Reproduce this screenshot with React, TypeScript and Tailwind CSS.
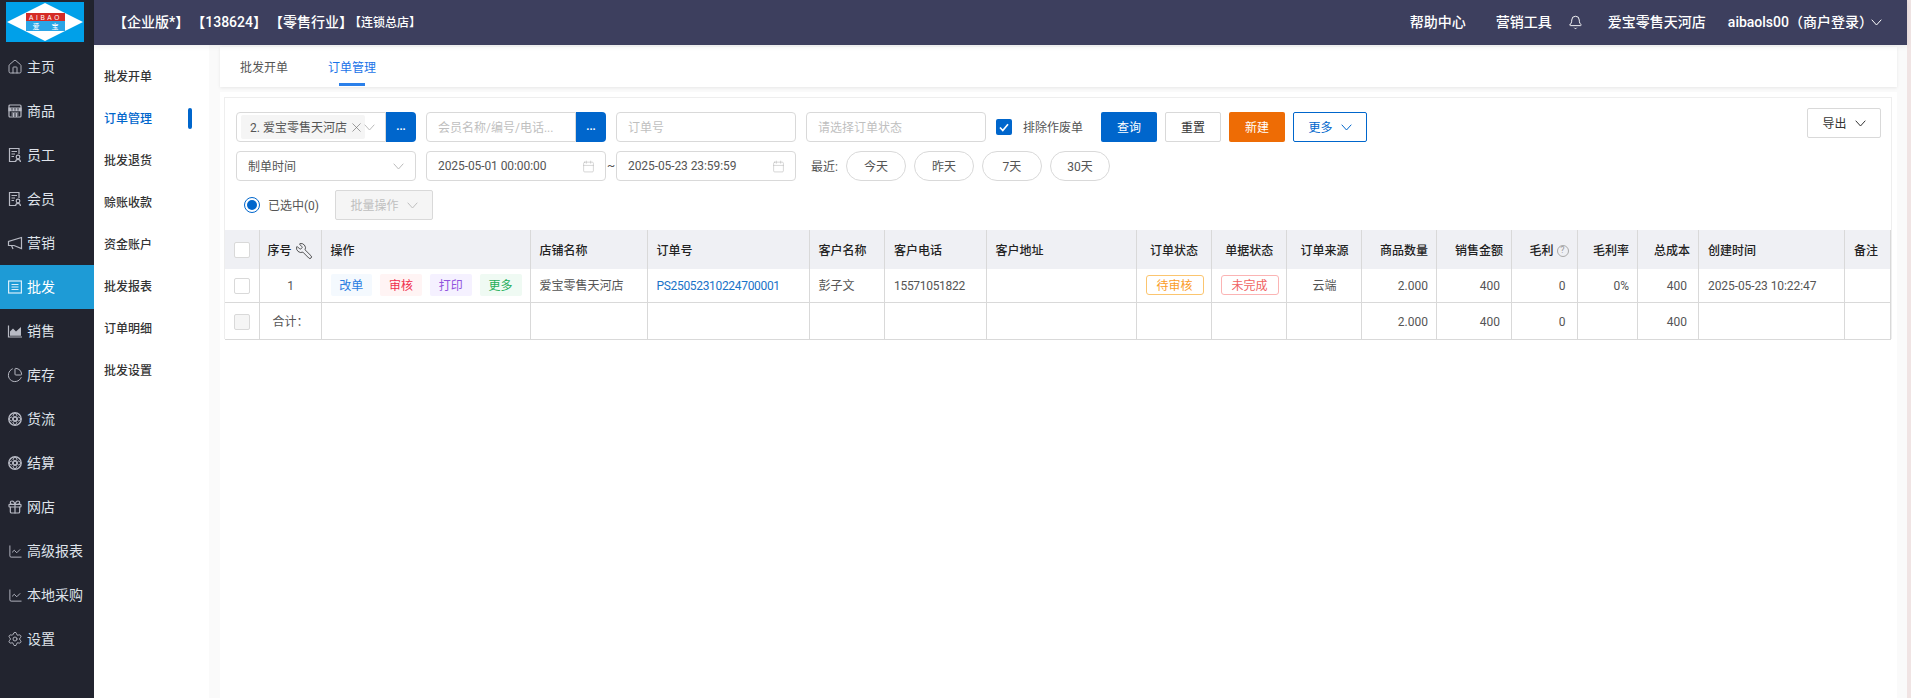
import type { ReactNode } from "react";
import { Bell, Calendar, ChartLine, ChartPie, Gift, House, Settings, Wrench, X } from "lucide-react";

function Chev(props: { className?: string }) {
  return (
    <svg width="11" height="7" viewBox="0 0 11 7" fill="none" stroke="currentColor" strokeWidth="1" className={props.className}>
      <path d="M0.7 0.7 5.5 6 10.3 0.7" />
    </svg>
  );
}

function Logo() {
  return (
    <svg width="78" height="40" viewBox="0 0 78 40" className="block">
      <rect width="78" height="40" fill="#00a0e9" />
      <path d="M39 1 77 20 39 39 1 20Z" fill="#fff" />
      <rect x="20" y="11" width="39" height="18" fill="#2aa5e6" />
      <rect x="20" y="11" width="39" height="8" fill="#d52b25" />
      <text x="39.5" y="17.6" textAnchor="middle" fontSize="6.5" letterSpacing="2.6" fill="#fff" fontFamily="Liberation Sans, sans-serif">AIBAO</text>
      <text x="30" y="27" textAnchor="middle" fontSize="7" fill="#fff" fontFamily="Noto Sans CJK SC, sans-serif">爱</text>
      <text x="49" y="27" textAnchor="middle" fontSize="7" fill="#fff" fontFamily="Noto Sans CJK SC, sans-serif">宝</text>
    </svg>
  );
}

function ShopIcon() {
  return (
    <svg width="16" height="16" viewBox="0 0 16 16" fill="none" stroke="currentColor" strokeWidth="1.2">
      <rect x="2" y="2" width="12" height="12" rx="1" />
      <path d="M2 5.2H14V7.6H2Z" fill="currentColor" />
      <path d="M5 7.6V5M8 7.6V5M11 7.6V5" stroke="#22242f" strokeWidth="0.8" />
      <path d="M4.5 10H11.5M4.5 12H11.5M6.5 10V14M9.5 10V14" strokeWidth="1" />
    </svg>
  );
}

function DocPersonIcon() {
  return (
    <svg width="16" height="16" viewBox="0 0 16 16" fill="none" stroke="currentColor" strokeWidth="1.2">
      <path d="M8 14.5H2.5V1.5H12V7" />
      <path d="M4.5 4.5H10M4.5 7H8M4.5 9.5H7" />
      <circle cx="11" cy="10" r="1.8" />
      <path d="M8.5 15c.2-1.7 1-2.6 2.5-2.6s2.3.9 2.5 2.6" />
    </svg>
  );
}

function MegaIcon() {
  return (
    <svg width="16" height="16" viewBox="0 0 16 16" fill="none" stroke="currentColor" strokeWidth="1.2">
      <path d="M14.5 2.5V13.5L7 10.5H1.5V6.5L14.5 2.5Z" />
      <path d="M4.5 10.5 6 14" />
    </svg>
  );
}

function ListBoxIcon() {
  return (
    <svg width="16" height="16" viewBox="0 0 16 16" fill="none" stroke="currentColor" strokeWidth="1.2">
      <rect x="1.6" y="2" width="12.8" height="12" />
      <path d="M4.5 5.5H11.5M4.5 8H11.5M4.5 10.5H11.5" strokeWidth="1" />
    </svg>
  );
}

function AreaIcon() {
  return (
    <svg width="16" height="16" viewBox="0 0 16 16" fill="none" stroke="currentColor" strokeWidth="1.2">
      <path d="M1.5 2.5V14H15" />
      <path d="M3 12.8V8.5L6 5.5 9 8.5 14 4V12.8Z" fill="currentColor" stroke="none" />
    </svg>
  );
}

function FlowIcon() {
  return (
    <svg width="16" height="16" viewBox="0 0 16 16" fill="none" stroke="currentColor" strokeWidth="1.4">
      <circle cx="8" cy="8" r="6.2" />
      <circle cx="8" cy="8" r="1.9" />
      <path d="M8 1.7 5.8 4.6 8 6 10.2 4.6ZM8 14.3 5.8 11.4 8 10 10.2 11.4ZM1.7 8 4.6 5.8 6 8 4.6 10.2ZM14.3 8 11.4 5.8 10 8 11.4 10.2Z" strokeWidth="1" />
    </svg>
  );
}

function NavItem(props: { icon: ReactNode; label: string; active?: boolean }) {
  return (
    <div className={`flex h-[44px] items-center pl-[7px] text-[14px] ${props.active ? "bg-[#1e9bd6] text-white" : "text-[#dfe3ea]"}`}>
      <span className={`flex w-[16px] justify-center ${props.active ? "text-[#d8eefa]" : "text-[#b8bac4]"}`}>{props.icon}</span>
      <span className="ml-[4px] pt-[1px]">{props.label}</span>
    </div>
  );
}

const navItems: { icon: ReactNode; label: string; active?: boolean }[] = [
  { icon: <House size={16} strokeWidth={1.4} />, label: "主页" },
  { icon: <ShopIcon />, label: "商品" },
  { icon: <DocPersonIcon />, label: "员工" },
  { icon: <DocPersonIcon />, label: "会员" },
  { icon: <MegaIcon />, label: "营销" },
  { icon: <ListBoxIcon />, label: "批发", active: true },
  { icon: <AreaIcon />, label: "销售" },
  { icon: <ChartPie size={16} strokeWidth={1.5} />, label: "库存" },
  { icon: <FlowIcon />, label: "货流" },
  { icon: <FlowIcon />, label: "结算" },
  { icon: <Gift size={16} strokeWidth={1.8} />, label: "网店" },
  { icon: <ChartLine size={15} strokeWidth={1.5} />, label: "高级报表" },
  { icon: <ChartLine size={15} strokeWidth={1.5} />, label: "本地采购" },
  { icon: <Settings size={16} strokeWidth={1.4} />, label: "设置" },
];

const subItems = ["批发开单", "订单管理", "批发退货", "赊账收款", "资金账户", "批发报表", "订单明细", "批发设置"];

function Checkbox(props: { disabled?: boolean }) {
  return <span className={`mx-auto block h-[16px] w-[16px] rounded-[2px] border border-[#d9d9d9] ${props.disabled ? "bg-[#f5f5f5]" : "bg-white"}`} />;
}

function BlueDots() {
  return <div className="flex h-[30px] items-center justify-center rounded-r-[4px] bg-[#0066cc] pb-[2px] text-[11px] font-bold leading-none text-white">...</div>;
}

function DateInput(props: { value: string }) {
  return (
    <div className="flex h-[30px] w-[180px] items-center justify-between rounded-[4px] border border-[#d9d9d9] pl-[11px] pr-[10px] text-[#555]">
      <span className="tracking-[-0.08px]">{props.value}</span>
      <Calendar size={13} strokeWidth={1} className="text-[#b5b5b5]" />
    </div>
  );
}

function Pill(props: { label: string }) {
  return <div className="flex h-[30px] w-[60px] items-center justify-center rounded-full border border-[#d9d9d9] pt-[2px] text-[#555]">{props.label}</div>;
}

function OpPill(props: { label: string; className: string }) {
  return <span className={`flex h-[22px] w-[42px] items-center justify-center rounded-[2px] pt-[1px] ${props.className}`}>{props.label}</span>;
}

const th = "border-r border-[#d9d9d9] bg-[#eff0f4] pl-[9px] pr-[8px] pt-[2px] text-[12px] font-medium text-[#222]";
const box = "border-r border-[#d9d9d9] pl-[9px] pr-[8px] text-[12px]";
const td = "border-r border-[#d9d9d9] pl-[9px] pr-[8px] pt-[2px] text-[12px] text-[#555]";
const tdLink = "border-r border-[#d9d9d9] pl-[9px] pr-[8px] pt-[2px] text-[12px] tracking-[-0.32px] text-[#1a73c8]";
const tdNum = "border-r border-[#d9d9d9] pl-[8px] pr-[11px] pt-[2px] text-right text-[12px] text-[#555]";
const field = "h-[30px] items-center border border-[#d9d9d9] pt-[2px]";

export default function App() {
  return (
    <div className="flex h-screen w-full overflow-hidden bg-[#f0e4e4] font-['Roboto','Noto_Sans_CJK_SC',sans-serif] text-[12px]">
      <aside className="w-[94px] shrink-0 bg-[#22242f]">
        <div className="h-[45px] pl-[6px] pt-[2px]">
          <Logo />
        </div>
        {navItems.map((item) => (
          <NavItem key={item.label} icon={item.icon} label={item.label} active={item.active} />
        ))}
      </aside>

      <div className="flex min-w-0 flex-1 flex-col">
        <header className="relative z-10 flex h-[45px] shrink-0 items-center justify-between bg-[#3d3f5e] pl-[19px] pr-[25px] font-medium text-white shadow-[0_1px_6px_rgba(0,0,0,0.08)]">
          <div className="flex items-center text-[14px]">
            <span>【企业版*】</span>
            <span className="ml-[2px]">【138624】</span>
            <span className="ml-[2px]">【零售行业】</span>
            <span className="-ml-[4px] text-[12px]">【连锁总店】</span>
          </div>
          <div className="flex items-center text-[14px]">
            <span>帮助中心</span>
            <span className="ml-[30px]">营销工具</span>
            <Bell size={15} strokeWidth={1.5} className="ml-[16px]" />
            <span className="ml-[25px]">爱宝零售天河店</span>
            <span className="ml-[22px]">aibaols00（商户登录）</span>
            <Chev className="-ml-[2px]" />
          </div>
        </header>

        <div className="flex min-h-0 flex-1">
          <nav className="w-[115px] shrink-0 bg-white pt-[10px] font-medium text-[#333]">
            {subItems.map((label) => (
              <div key={label} className={`relative flex h-[42px] items-center pl-[10px] pt-[2px] ${label === "订单管理" ? "text-[#0066cc]" : ""}`}>
                {label}
                {label === "订单管理" && <span className="absolute left-[94px] top-[11px] h-[21px] w-[4px] rounded-[2px] bg-[#0066cc]" />}
              </div>
            ))}
          </nav>

          <main className="flex min-w-0 flex-1 flex-col bg-[#fafafa] pl-[11px] pr-[10px] pt-[2px]">
            <div className="flex h-[40px] shrink-0 bg-white pl-[20px] shadow-[0_1px_3px_rgba(0,0,0,0.08)]">
              <div className="flex h-[40px] items-center pt-[1px] text-[#555]">批发开单</div>
              <div className="relative ml-[40px] flex h-[40px] items-center pt-[1px] text-[#1a73e8]">
                订单管理
                <span className="absolute bottom-[1px] left-[11px] h-[3px] w-[26px] bg-[#2b80ea]" />
              </div>
            </div>

            <div className="mt-[5px] flex-1 bg-white pl-[4px] pr-[5px] pt-[5px]">
              <section className="h-[242px] border border-b-0 border-[#eeeeee] bg-white">
                <div className="flex justify-between pl-[11px] pr-[10px] pt-[14px]">
                  <div className="flex flex-col gap-[9px]">
                    <div className="flex items-center">
                      <div className="flex h-[30px] w-[150px] items-center rounded-l-[4px] border border-[#d9d9d9] pl-[4px]">
                        <div className="flex h-[24px] w-[124px] items-center rounded-[2px] bg-[#f5f5f5] pl-[9px] pt-[1px] text-[#555]">
                          2. 爱宝零售天河店
                          <X size={15} strokeWidth={1} className="ml-[2px] text-[#666]" />
                        </div>
                        <Chev className="ml-[-1px] text-[#bbb]" />
                      </div>
                      <div className="w-[30px]"><BlueDots /></div>
                      <div className={`${field} ml-[10px] flex w-[150px] rounded-l-[4px] pl-[11px] text-[#bfbfbf]`}>会员名称/编号/电话...</div>
                      <div className="w-[30px]"><BlueDots /></div>
                      <div className={`${field} ml-[10px] flex w-[180px] rounded-[4px] pl-[11px] text-[#bfbfbf]`}>订单号</div>
                      <div className={`${field} ml-[10px] flex w-[180px] rounded-[4px] pl-[11px] text-[#bfbfbf]`}>请选择订单状态</div>
                      <div className="ml-[10px] flex h-[16px] w-[16px] items-center justify-center rounded-[2px] bg-[#0066cc]">
                        <svg width="10" height="9" viewBox="0 0 10 9" fill="none" stroke="#fff" strokeWidth="1.7"><path d="M1 4.5 3.8 7.5 9 1.2" /></svg>
                      </div>
                      <span className="ml-[11px] pt-[2px] text-[#555]">排除作废单</span>
                      <button className="ml-[18px] h-[30px] w-[56px] rounded-[2px] bg-[#0066cc] pt-[2px] text-white">查询</button>
                      <button className="ml-[8px] h-[30px] w-[56px] rounded-[2px] border border-[#d9d9d9] pt-[2px] text-[#333]">重置</button>
                      <button className="ml-[8px] h-[30px] w-[56px] rounded-[2px] bg-[#ee6c05] pt-[2px] text-white">新建</button>
                      <button className="ml-[8px] flex h-[30px] w-[74px] items-center justify-center gap-[8px] rounded-[2px] border border-[#0066cc] text-[#0066cc]">
                        <span className="pt-[2px]">更多</span> <Chev />
                      </button>
                    </div>

                    <div className="flex items-center">
                      <div className="flex h-[30px] w-[180px] items-center justify-between rounded-[4px] border border-[#d9d9d9] pl-[11px] pr-[11px] text-[#555]">
                        <span className="pt-[2px]">制单时间</span>
                        <Chev className="text-[#bbb]" />
                      </div>
                      <div className="ml-[10px]"><DateInput value="2025-05-01 00:00:00" /></div>
                      <span className="w-[10px] text-center text-[#555]">~</span>
                      <DateInput value="2025-05-23 23:59:59" />
                      <span className="ml-[15px] pt-[2px] text-[#555]">最近:</span>
                      <div className="ml-[8px] flex gap-[8px]">
                        <Pill label="今天" />
                        <Pill label="昨天" />
                        <Pill label="7天" />
                        <Pill label="30天" />
                      </div>
                    </div>

                    <div className="flex items-center pl-[8px]">
                      <span className="flex h-[16px] w-[16px] items-center justify-center rounded-full border border-[#0066cc]">
                        <span className="h-[10px] w-[10px] rounded-full bg-[#0066cc]" />
                      </span>
                      <span className="ml-[8px] pt-[2px] text-[#555]">已选中(0)</span>
                      <div className="ml-[16px] flex h-[30px] w-[98px] items-center justify-center gap-[8px] rounded-[2px] border border-[#d9d9d9] bg-[#f5f5f5] text-[#bfbfbf]">
                        <span className="pt-[1px]">批量操作</span> <Chev />
                      </div>
                    </div>
                  </div>

                  <button className="-mt-[4px] flex h-[30px] w-[74px] shrink-0 items-center justify-center gap-[8px] rounded-[2px] border border-[#d9d9d9] text-[#333]">
                    <span className="pt-[2px]">导出</span> <Chev />
                  </button>
                </div>

                <table className="mt-[10px] w-full table-fixed border-collapse border-b border-[#d9d9d9]">
                  <colgroup>
                    <col className="w-[34px]" />
                    <col className="w-[62px]" />
                    <col className="w-[209px]" />
                    <col className="w-[117px]" />
                    <col className="w-[162px]" />
                    <col className="w-[75.5px]" />
                    <col className="w-[101.5px]" />
                    <col className="w-[150px]" />
                    <col className="w-[75px]" />
                    <col className="w-[75.5px]" />
                    <col className="w-[75px]" />
                    <col className="w-[75px]" />
                    <col className="w-[75px]" />
                    <col className="w-[65.5px]" />
                    <col className="w-[60.5px]" />
                    <col className="w-[61px]" />
                    <col className="w-[146px]" />
                    <col />
                  </colgroup>
                  <thead>
                    <tr className="h-[39px]">
                      <th className={box + " bg-[#eff0f4]"}><Checkbox /></th>
                      <th className="border-r border-[#d9d9d9] bg-[#eff0f4] pt-[2px] text-[12px] font-medium text-[#222]">
                        <span className="flex items-center justify-center gap-[3px] whitespace-nowrap">序号 <Wrench size={18} strokeWidth={1} className="-scale-x-100" /></span>
                      </th>
                      <th className={`${th} text-left`}>操作</th>
                      <th className={`${th} text-left`}>店铺名称</th>
                      <th className={`${th} text-left`}>订单号</th>
                      <th className={`${th} text-left`}>客户名称</th>
                      <th className={`${th} text-left`}>客户电话</th>
                      <th className={`${th} text-left`}>客户地址</th>
                      <th className={`${th} text-center`}>订单状态</th>
                      <th className={`${th} text-center`}>单据状态</th>
                      <th className={`${th} text-center`}>订单来源</th>
                      <th className={`${th} text-right`}>商品数量</th>
                      <th className={`${th} text-right`}>销售金额</th>
                      <th className={`${th} text-right`}>
                        <span className="inline-flex items-center gap-[3px]">
                          毛利
                          <span className="flex h-[12px] w-[12px] items-center justify-center rounded-full border border-[#aaa] text-[9px] font-normal leading-none text-[#999]">?</span>
                        </span>
                      </th>
                      <th className={`${th} text-right`}>毛利率</th>
                      <th className={`${th} text-right`}>总成本</th>
                      <th className={`${th} text-left`}>创建时间</th>
                      <th className={`${th} text-left`}>备注</th>
                    </tr>
                  </thead>
                  <tbody>
                    <tr className="h-[33px] border-b border-[#d9d9d9]">
                      <td className={td}><Checkbox /></td>
                      <td className={`${td} text-center`}>1</td>
                      <td className={box}>
                        <div className="flex gap-[8px]">
                          <OpPill label="改单" className="bg-[#f4f9fe] text-[#2a7de1]" />
                          <OpPill label="审核" className="bg-[#fff4f4] text-[#f0304f]" />
                          <OpPill label="打印" className="bg-[#f5f1ff] text-[#9254de]" />
                          <OpPill label="更多" className="bg-[#effaf3] text-[#1fae5a]" />
                        </div>
                      </td>
                      <td className={td}>爱宝零售天河店</td>
                      <td className={tdLink}>PS25052310224700001</td>
                      <td className={td}>彭子文</td>
                      <td className={`${td} tracking-[-0.3px]`}>15571051822</td>
                      <td className={td}></td>
                      <td className={box}>
                        <span className="mx-auto flex h-[20px] w-[58px] items-center justify-center rounded-[3px] border border-[#fbc56f] pt-[1px] text-[#fa9c2a]">待审核</span>
                      </td>
                      <td className={box}>
                        <span className="mx-auto flex h-[20px] w-[58px] items-center justify-center rounded-[3px] border border-[#fbb4b4] pt-[1px] text-[#f0625f]">未完成</span>
                      </td>
                      <td className={`${td} text-center`}>云端</td>
                      <td className={`${td} text-right`}>2.000</td>
                      <td className={tdNum}>400</td>
                      <td className={tdNum}>0</td>
                      <td className={`${td} text-right`}>0%</td>
                      <td className={tdNum}>400</td>
                      <td className={`${td} tracking-[-0.08px]`}>2025-05-23 10:22:47</td>
                      <td className={td}></td>
                    </tr>
                    <tr className="h-[37px]">
                      <td className={td}><Checkbox disabled /></td>
                      <td className={`${td} text-center`}>合计：</td>
                      <td className={td}></td>
                      <td className={td}></td>
                      <td className={td}></td>
                      <td className={td}></td>
                      <td className={td}></td>
                      <td className={td}></td>
                      <td className={td}></td>
                      <td className={td}></td>
                      <td className={td}></td>
                      <td className={`${td} text-right`}>2.000</td>
                      <td className={tdNum}>400</td>
                      <td className={tdNum}>0</td>
                      <td className={td}></td>
                      <td className={tdNum}>400</td>
                      <td className={td}></td>
                      <td className={td}></td>
                    </tr>
                  </tbody>
                </table>
              </section>
            </div>
          </main>
        </div>
      </div>
      <div className="w-[4px] shrink-0" />
    </div>
  );
}
